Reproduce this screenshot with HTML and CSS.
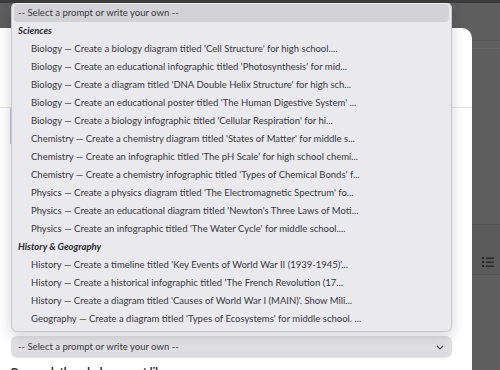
FILE: index.html
```html
<!DOCTYPE html>
<html lang="en">
<head>
  <meta charset="UTF-8">
  <title>Prompt picker</title>
  <link rel="stylesheet" href="styles.css">
</head>
<body>
  <div class="page">
    <section class="modal">
      <div class="modal-head"></div>
      <div class="modal-note"></div>
      <div class="modal-body">
        <div class="picker">
          <ul class="picker-menu">
            <li class="opt opt-active">-- Select a prompt or write your own --</li>
            <li class="group">Sciences</li>
            <li class="opt sub">Biology — Create a biology diagram titled 'Cell Structure' for high school....</li>
            <li class="opt sub">Biology — Create an educational infographic titled 'Photosynthesis' for mid...</li>
            <li class="opt sub">Biology — Create a diagram titled 'DNA Double Helix Structure' for high sch...</li>
            <li class="opt sub">Biology — Create an educational poster titled 'The Human Digestive System' ...</li>
            <li class="opt sub">Biology — Create a biology infographic titled 'Cellular Respiration' for hi...</li>
            <li class="opt sub">Chemistry — Create a chemistry diagram titled 'States of Matter' for middle s...</li>
            <li class="opt sub">Chemistry — Create an infographic titled 'The pH Scale' for high school chemi...</li>
            <li class="opt sub">Chemistry — Create a chemistry infographic titled 'Types of Chemical Bonds' f...</li>
            <li class="opt sub">Physics — Create a physics diagram titled 'The Electromagnetic Spectrum' fo...</li>
            <li class="opt sub">Physics — Create an educational diagram titled 'Newton's Three Laws of Moti...</li>
            <li class="opt sub">Physics — Create an infographic titled 'The Water Cycle' for middle school....</li>
            <li class="group">History &amp; Geography</li>
            <li class="opt sub">History — Create a timeline titled 'Key Events of World War II (1939-1945)'...</li>
            <li class="opt sub">History — Create a historical infographic titled 'The French Revolution (17...</li>
            <li class="opt sub">History — Create a diagram titled 'Causes of World War I (MAIN)'. Show Mili...</li>
            <li class="opt sub">Geography — Create a diagram titled 'Types of Ecosystems' for middle school. ...</li>
          </ul>
          <div class="picker-select">
            <span>-- Select a prompt or write your own --</span>
            <svg class="chevron" width="8" height="5" viewBox="0 0 8 5"><path d="M1 1l3 3 3-3" fill="none" stroke="#555" stroke-width="1.2"/></svg>
          </div>
        </div>
        <p class="picker-hint">Or search the whole prompt library</p>
      </div>
    </section>

    <aside class="backdrop">
      <div class="backdrop-bar"></div>
      <div class="backdrop-row">
        <svg width="12" height="10" viewBox="0 0 12 10">
          <rect x="0" y="0" width="2" height="2" fill="#222"/>
          <rect x="4" y="0.5" width="8" height="1.3" fill="#222"/>
          <rect x="0" y="4" width="2" height="2" fill="#222"/>
          <rect x="4" y="4.5" width="8" height="1.3" fill="#222"/>
          <rect x="0" y="8" width="2" height="2" fill="#222"/>
          <rect x="4" y="8.5" width="8" height="1.3" fill="#222"/>
        </svg>
      </div>
    </aside>
  </div>
</body>
</html>
```

FILE: styles.css
```css
/* ---- General ---- */

:root {
  --overlay: #5e5e5e;
  --menuBg: #e9e9ee;
  --text: #38383c;
}

* {
  box-sizing: border-box;
}

body {
  margin: 0;
  height: 370px;
  overflow: hidden;
  background: var(--overlay);
  border-top: 3px solid #3a3a3a;
  font-family: Lato, "Noto Sans", sans-serif;
  font-size: 9.5px;
  color: var(--text);
}

.page {
  display: flex;
  height: 367px;
}

/* ---- Modal ---- */

.modal {
  width: 472px;
  margin-top: 25px;
  background: #fff;
  border-radius: 0 10px 0 0;
  display: flex;
  flex-direction: column;
}

.modal > div {
  flex-shrink: 0;
}

.modal-head {
  height: 80px;
  border-bottom: 1px solid #e6e6e6;
}

.modal-note {
  height: 36px;
  margin-left: 10px;
  border-left: 2px solid #cbbfe6;
}

.modal-body {
  padding: 0 20px 0 11px;
  margin-top: 192px;
}

/* ---- Select ---- */

.picker {
  position: relative;
}

.picker-select {
  height: 21px;
  display: flex;
  align-items: center;
  justify-content: space-between;
  padding: 0 8px 0 7px;
  border-radius: 6px;
  background: linear-gradient(#e4e4e7, #dcdce0);
  box-shadow: 0 1px 2px rgba(0, 0, 0, 0.12);
}

.chevron {
  margin-top: 1px;
}

.picker-hint {
  margin: 8px 0 0 -1px;
  font-size: 11px;
  font-weight: 700;
  color: #222;
}

.picker-menu {
  position: absolute;
  left: 0;
  right: 0;
  bottom: 25px;
  margin: 0;
  padding: 1px 0 3px;
  list-style: none;
  background: var(--menuBg);
  border: 1px solid #c9c9cd;
  border-radius: 6px;
  box-shadow: 0 4px 14px rgba(0, 0, 0, 0.18);
}

.opt,
.group {
  height: 18px;
  line-height: 18px;
  white-space: nowrap;
  overflow: hidden;
  padding-left: 6px;
}

.opt-active {
  margin: 0 2px;
  padding-left: 4px;
  border-radius: 4px;
  background: #d3d3d7;
}

.group {
  font-weight: 700;
  font-style: italic;
  color: #2b2b2f;
}

.sub {
  padding-left: 19px;
}

/* ---- Backdrop ---- */

.backdrop {
  flex: 1;
  display: flex;
  flex-direction: column;
}

.backdrop-bar {
  height: 9px;
  margin-top: 37px;
  border-top: 1px solid #555;
  border-bottom: 1px solid #666;
}

.backdrop-row {
  height: 51px;
  margin-top: 175px;
  background: #5a5a5a;
  border-top: 1px solid #545454;
  border-bottom: 1px solid #545454;
  display: flex;
  align-items: center;
  padding-left: 10px;
  padding-top: 24px;
}
```
